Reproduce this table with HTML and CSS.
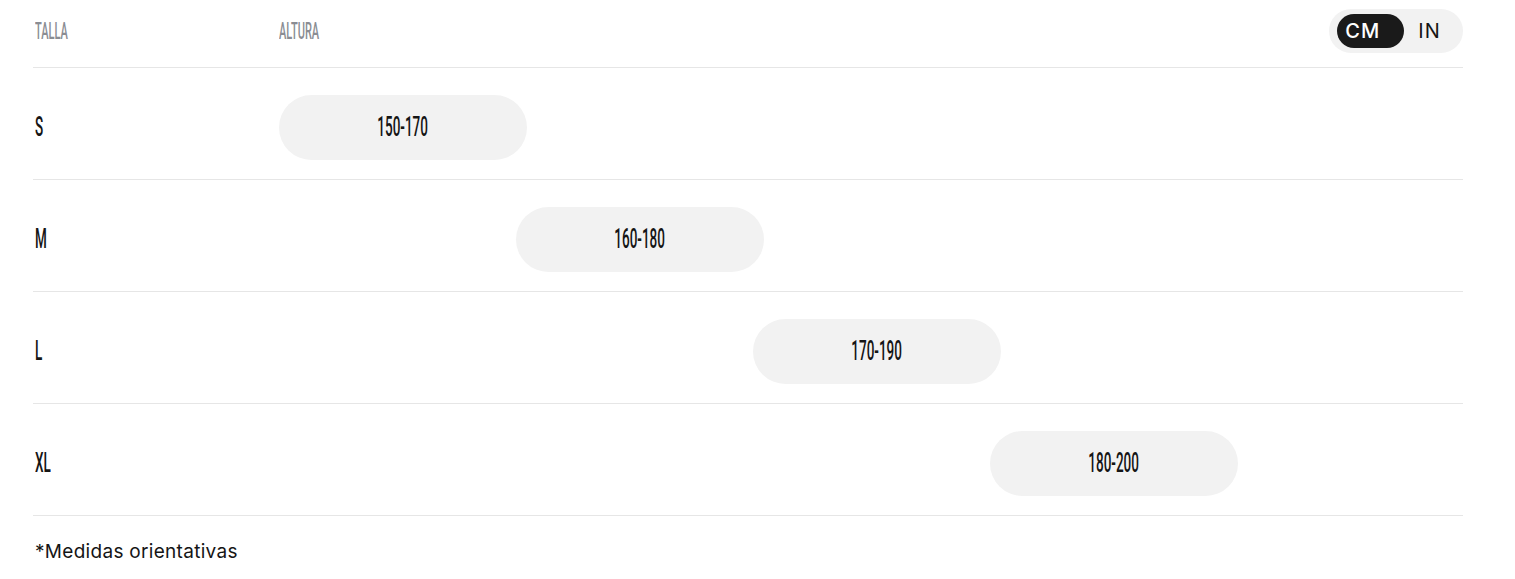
FILE: index.html
```html
<!DOCTYPE html>
<html lang="es">
<head>
<meta charset="utf-8">
<title>Guía de tallas</title>
<link rel="stylesheet" href="styles.css">
</head>
<body>
<div class="chart">
  <div class="row head">
    <div class="col-size"><span class="cond head-text">TALLA</span></div>
    <div class="track"><span class="cond head-text">ALTURA</span></div>
    <div class="toggle">
      <button class="unit active">CM</button>
      <button class="unit">IN</button>
    </div>
  </div>
  <div class="row">
    <div class="col-size"><span class="cond label">S</span></div>
    <div class="track"><div class="pill" style="margin-left:0px"><span class="cond value">150-170</span></div></div>
  </div>
  <div class="row">
    <div class="col-size"><span class="cond label">M</span></div>
    <div class="track"><div class="pill" style="margin-left:237px"><span class="cond value">160-180</span></div></div>
  </div>
  <div class="row">
    <div class="col-size"><span class="cond label">L</span></div>
    <div class="track"><div class="pill" style="margin-left:474px"><span class="cond value">170-190</span></div></div>
  </div>
  <div class="row">
    <div class="col-size"><span class="cond label">XL</span></div>
    <div class="track"><div class="pill" style="margin-left:711px"><span class="cond value">180-200</span></div></div>
  </div>
  <p class="note">*Medidas orientativas</p>
</div>
</body>
</html>
```
FILE: styles.css
```css
* { box-sizing: border-box; }
html, body { margin: 0; padding: 0; background: #fff; }
body { font-family: Inter, "Liberation Sans", Arial, sans-serif; color: #151515; }

.chart {
  width: 1430px;
  margin-left: 33px;
}

.row {
  display: flex;
  align-items: center;
  border-bottom: 1px solid #e6e6e6;
  padding: 27px 0 19px;
}

.row.head {
  padding: 9px 0 14px;
}

.col-size {
  width: 246px;
  flex: none;
  padding-left: 2px;
}

.track {
  flex: 1;
  display: flex;
  align-items: center;
}

.cond {
  display: inline-block;
  font-family: Roboto, "DejaVu Sans", sans-serif;
  font-weight: 500;
  transform: scaleX(0.5);
  transform-origin: left center;
  white-space: nowrap;
  line-height: 1;
}

.head-text {
  font-size: 24px;
  font-weight: 500;
  color: #8a8d93;
  transform: scaleX(0.46);
}

.label {
  font-size: 27px;
  color: #151515;
}

.pill {
  width: 248px;
  height: 65px;
  border-radius: 33px;
  background: #f2f2f2;
  display: flex;
  align-items: center;
  justify-content: center;
}

.value {
  font-size: 27px;
  color: #151515;
  transform-origin: center center;
}

.toggle {
  display: flex;
  align-items: center;
  height: 44px;
  padding: 0 8px;
  background: #f2f2f2;
  border-radius: 22px;
  margin-left: auto;
}

.unit {
  border: 0;
  background: transparent;
  font-family: Inter, "Liberation Sans", Arial, sans-serif;
  font-weight: 500;
  font-size: 20px;
  letter-spacing: 1.2px;
  color: #151515;
  height: 34px;
  border-radius: 17px;
  padding: 0 0 0 8px;
  text-align: left;
  cursor: pointer;
}

.unit.active {
  background: #1a1a1a;
  color: #fff;
  width: 67px;
}

.unit + .unit {
  padding: 0 14px 0 14px;
  font-weight: 400;
}

.note {
  margin: 24px 0 0;
  padding-left: 2px;
  font-size: 19px;
  letter-spacing: 0.3px;
  color: #151515;
}
```
